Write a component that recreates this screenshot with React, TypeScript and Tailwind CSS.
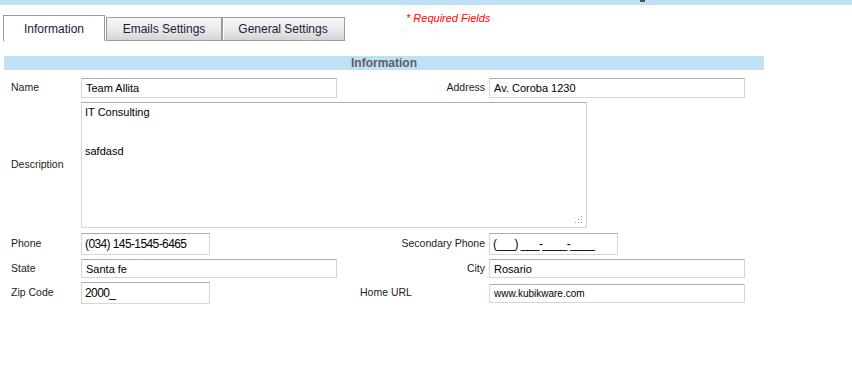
import React from "react";

const inputBase =
  "block h-full bg-white border border-[#d3d6dc] border-t-[#abadb3] outline-none text-black font-['Liberation_Sans',Arial,sans-serif]";

function Field({ value, w, big }: { value: string; w: string; big?: boolean }) {
  return (
    <input
      readOnly
      value={value}
      className={`${inputBase} ${w} ${
        big ? "text-[12px] tracking-[-0.6px] pl-[3px]" : "text-[11px] pl-[4px]"
      }`}
    />
  );
}

export default function App() {
  return (
    <div className="relative w-[852px] h-[369px] bg-white overflow-hidden font-['Liberation_Sans',Arial,sans-serif] text-[#222]">
      <div className="h-[5px] bg-[#bfe1f5]" />
      <div className="absolute left-[640px] top-0 w-[5px] h-[2px] bg-[#555]" />

      {/* tabs row */}
      <div className="flex items-start pl-[3px] pt-[7px]">
        <div className="flex items-end mt-[3px] h-[26px]">
          <div className="w-[102px] h-[26px] border border-b-0 border-[#9a9a9a] bg-white flex items-center justify-center text-[12px] text-[#1a1a3a]">
            Information
          </div>
          <div className="ml-px w-[116px] h-[24px] border border-[#9a9a9a] bg-gradient-to-b from-[#f6f6f6] via-[#ebebeb] to-[#d4d4d4] flex items-center justify-center text-[12px] text-[#1a1a3a]">
            Emails Settings
          </div>
          <div className="w-[123px] h-[24px] border border-l-0 border-[#9a9a9a] bg-gradient-to-b from-[#f6f6f6] via-[#ebebeb] to-[#d4d4d4] flex items-center justify-center text-[12px] text-[#1a1a3a] shadow-[inset_1px_0_0_#9a9a9a,inset_2px_0_0_#fff]">
            General Settings
          </div>
        </div>
        <div className="ml-[61px] text-[11px] italic text-[#f00] leading-[13px]">* Required Fields</div>
      </div>

      {/* section header */}
      <div className="mt-[15px] ml-[4px] w-[760px] h-[14px] bg-[#bfe1f5] flex items-center justify-center text-[12px] font-bold text-[#606060] leading-[14px]">
        Information
      </div>

      <div className="pl-[4px] text-[10.5px]">
        {/* Name / Address */}
        <div className="flex items-center h-[20px] mt-[8px]">
          <div className="w-[77px] pl-[7px]">Name</div>
          <div className="w-[277px] h-full">
            <Field value="Team Allita" w="w-[256px]" />
          </div>
          <div className="w-[127px] text-right">Address</div>
          <div className="w-[4px]" />
          <div className="h-full">
            <Field value="Av. Coroba 1230" w="w-[256px]" />
          </div>
        </div>

        {/* Description */}
        <div className="flex items-center h-[126px] mt-[4px]">
          <div className="w-[77px] pl-[7px]">Description</div>
          <div className="relative w-[506px] h-full">
            <textarea
              readOnly
              value={"IT Consulting\n\n\nsafdasd"}
              className="block w-full h-full resize-none bg-white border border-[#d3d6dc] border-t-[#abadb3] outline-none text-[11px] leading-[13px] pl-[3px] pt-[3px] text-black font-['Liberation_Sans',Arial,sans-serif]"
            />
            <svg className="absolute right-[5px] bottom-[5px]" width="7" height="7" viewBox="0 0 7 7">
              <rect x="6" y="0" width="1" height="1" fill="#999" />
              <rect x="3" y="3" width="1" height="1" fill="#999" />
              <rect x="6" y="3" width="1" height="1" fill="#999" />
              <rect x="0" y="6" width="1" height="1" fill="#999" />
              <rect x="3" y="6" width="1" height="1" fill="#999" />
              <rect x="6" y="6" width="1" height="1" fill="#999" />
            </svg>
          </div>
        </div>

        {/* Phone / Secondary Phone */}
        <div className="flex items-center h-[22px] mt-[5px]">
          <div className="w-[77px] pl-[7px]">Phone</div>
          <div className="w-[277px] h-full">
            <Field value="(034) 145-1545-6465" w="w-[129px]" big />
          </div>
          <div className="w-[127px] text-right">Secondary Phone</div>
          <div className="w-[4px]" />
          <div className="h-full">
            <Field value="(___) ___-____-____" w="w-[129px]" big />
          </div>
        </div>

        {/* State / City */}
        <div className="flex items-center h-[19px] mt-[4px]">
          <div className="w-[77px] pl-[7px]">State</div>
          <div className="w-[277px] h-full">
            <Field value="Santa fe" w="w-[256px]" />
          </div>
          <div className="w-[127px] text-right">City</div>
          <div className="w-[4px]" />
          <div className="h-full">
            <Field value="Rosario" w="w-[256px]" />
          </div>
        </div>

        {/* Zip / Home URL */}
        <div className="flex items-center h-[22px] mt-[4px]">
          <div className="w-[77px] pl-[7px]">Zip Code</div>
          <div className="w-[277px] h-full">
            <Field value="2000_" w="w-[129px]" big />
          </div>
          <div className="w-[127px] pl-[2px]">Home URL</div>
          <div className="w-[4px]" />
          <div className="h-[19px]">
            <input
              readOnly
              value="www.kubikware.com"
              className={`${inputBase} w-[256px] text-[10px] pl-[4px]`}
            />
          </div>
        </div>
      </div>
    </div>
  );
}
